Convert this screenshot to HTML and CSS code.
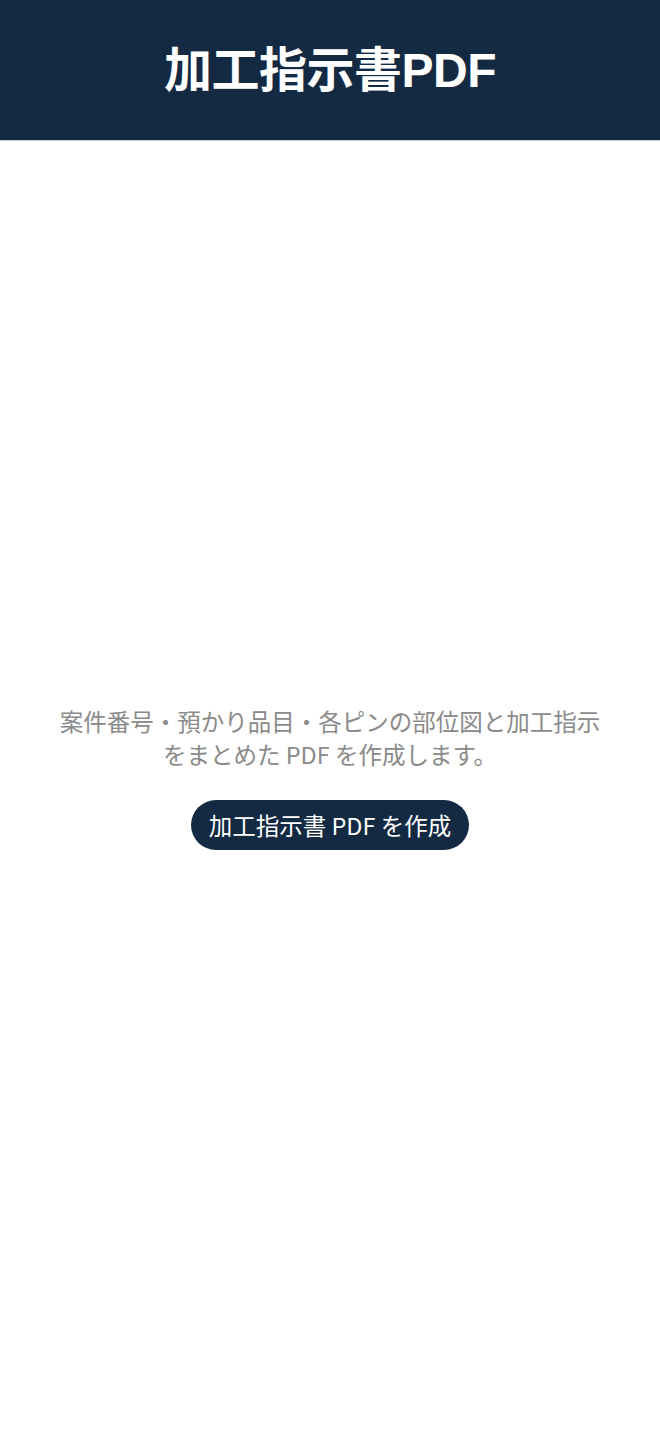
FILE: index.html
```html
<!DOCTYPE html>
<html lang="ja">
<head>
<meta charset="utf-8">
<title>加工指示書PDF</title>
<link rel="stylesheet" href="styles.css">
</head>
<body>
<div class="page">
  <header class="header">
    <h1 class="title">加工指示書PDF</h1>
  </header>
  <main class="content">
    <p class="desc">案件番号・預かり品目・各ピンの部位図と加工指示をまとめた PDF を作成します。</p>
    <button class="btn" type="button">加工指示書 PDF を作成</button>
  </main>
</div>
</body>
</html>
```

FILE: styles.css
```css
html, body {
  margin: 0;
  padding: 0;
  background: #ffffff;
}
body {
  font-family: "Noto Sans CJK JP", "Noto Sans", sans-serif;
}
.page {
  display: flex;
  flex-direction: column;
  min-height: 1434px;
}
.header {
  height: 141px;
  background: #132a42;
  border-bottom: 1px solid #c9d0d8;
  box-sizing: border-box;
  display: flex;
  align-items: center;
  justify-content: center;
}
.title {
  margin: 0;
  color: #ffffff;
  font-family: "Liberation Sans", "Noto Sans CJK JP", sans-serif;
  font-weight: 700;
  font-size: 48px;
  letter-spacing: -0.5px;
  line-height: 1;
  padding-top: 2px;
}
.content {
  flex: 1;
  display: flex;
  flex-direction: column;
  align-items: center;
  justify-content: center;
  padding: 0 40px 20px;
}
.desc {
  margin: 0;
  max-width: 552px;
  color: #8a8a8a;
  font-size: 23.5px;
  line-height: 33px;
  text-align: center;
}
.btn {
  margin-top: 29px;
  height: 50px;
  padding: 0 18px;
  border: none;
  border-radius: 25px;
  background: #132a42;
  color: #ffffff;
  font-family: "Noto Sans CJK JP", "Noto Sans", sans-serif;
  font-size: 23.5px;
  line-height: 50px;
}
```
